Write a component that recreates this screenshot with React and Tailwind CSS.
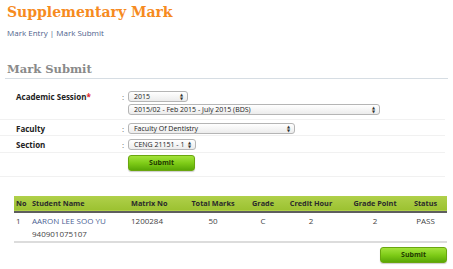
import React from 'react';

const Select = ({ value, className = '' }) => (
    <div className={`flex items-center justify-between h-[11px] pl-[5px] pr-[4px] rounded-[3px] border border-[#b5b5b5] bg-gradient-to-b from-white to-[#ececec] text-[7px] text-[#222] leading-none ${className}`}>
        <span>{value}</span>
        <span className="flex flex-col text-[4px] leading-[4px] text-[#333]">
            <span>▲</span>
            <span>▼</span>
        </span>
    </div>
);

const GreenButton = ({ className = '' }) => (
    <button className={`h-[16px] w-[67px] rounded-[3px] border border-[#6aa60f] bg-gradient-to-b from-[#a3e33a] via-[#7fcc17] to-[#5aa806] text-[7px] font-bold text-[#1e3a00] shadow-[0_1px_1px_rgba(0,0,0,0.2)] ${className}`}>
        Submit
    </button>
);

const FormRow = ({ label, required, children, className = '' }) => (
    <div className={`flex border-b border-[#f1f1f1] ${className}`}>
        <div className="w-[122px] pl-[16px] text-[8px] font-bold text-[#222] pt-[3px]">
            {label}
            {required && <span className="text-[#e0262c]">*</span>}
        </div>
        <div className="w-[6px] text-[8px] text-[#666] pt-[3px]">:</div>
        <div className="flex flex-col gap-[2px] pt-[3px]">{children}</div>
    </div>
);

const App = () => {
    const cols = [
        { name: 'No', w: 'w-[16px]', cls: 'pl-[2px] text-left' },
        { name: 'Student Name', w: 'w-[99px]', cls: 'pl-[2px] text-left' },
        { name: 'Matrix No', w: 'w-[59px]', cls: 'pl-[2px] text-left' },
        { name: 'Total Marks', w: 'w-[50px]', cls: 'text-center' },
        { name: 'Grade', w: 'w-[50px]', cls: 'text-center' },
        { name: 'Credit Hour', w: 'w-[46px]', cls: 'text-center' },
        { name: 'Grade Point', w: 'w-[70px]', cls: 'pl-[12px] text-center' },
        { name: 'Status', w: 'w-[43px]', cls: 'text-center' },
    ];
    const row = ['1', 'AARON LEE SOO YU', '1200284', '50', 'C', '2', '2', 'PASS'];

    return (
        <div className="w-[453px] h-[269px] bg-white overflow-hidden" style={{ fontFamily: '"Open Sans", "DejaVu Sans", sans-serif' }}>
            <div className="pl-[7px] pt-[1px]">
                <h1 className="text-[14px] font-bold text-[#f68b1f] leading-[22px]" style={{ fontFamily: '"DejaVu Serif", serif' }}>
                    Supplementary Mark
                </h1>
                <div className="mt-[4px] text-[8px] text-[#4f5f8c] leading-[12px]">
                    <span>Mark Entry</span> | <span>Mark Submit</span>
                </div>
            </div>

            <div className="mt-[22px] mx-[5px] border-b border-[#d6dde3] pb-[1px]">
                <h2 className="pl-[2px] text-[11.5px] font-bold text-[#8a8a8a] leading-[16px]" style={{ fontFamily: '"DejaVu Serif", serif' }}>
                    Mark Submit
                </h2>
            </div>

            <div className="mt-[9px] mr-[8px]">
                <FormRow label="Academic Session" required className="h-[32px]">
                    <Select value="2015" className="w-[60px]" />
                    <Select value="2015/02 - Feb 2015 - July 2015 (BDS)" className="w-[252px]" />
                </FormRow>
                <FormRow label="Faculty" className="h-[16px]">
                    <Select value="Faculty Of Dentistry" className="w-[167px]" />
                </FormRow>
                <FormRow label="Section" className="h-[17px]">
                    <Select value="CENG 21151 - 1" className="w-[68px]" />
                </FormRow>
                <div className="flex h-[24px] border-b border-[#f1f1f1] pl-[128px] pt-[2px]">
                    <GreenButton />
                </div>
            </div>

            <div className="mt-[19px] mx-[14px] w-[433px]">
                <table className="w-full table-fixed border-collapse">
                    <colgroup>
                        {cols.map(c => <col key={c.name} className={c.w} />)}
                    </colgroup>
                    <thead>
                        <tr className="h-[16px] bg-gradient-to-b from-[#b0d04a] to-[#9cc231] border-b-2 border-[#5e5e5e]">
                            {cols.map(c => (
                                <th key={c.name} className={`font-bold text-[7.3px] text-[#2b2b2b] p-0 whitespace-nowrap ${c.cls}`}>{c.name}</th>
                            ))}
                        </tr>
                    </thead>
                    <tbody className="text-[#444] text-[8px]">
                        <tr className="h-[14px]">
                            {row.map((v, i) => (
                                <td key={i} className={`pt-[2px] p-0 whitespace-nowrap ${cols[i].cls} ${i === 1 ? 'text-[#4d5f94]' : ''}`}>{v}</td>
                            ))}
                        </tr>
                        <tr className="h-[14px]">
                            <td></td>
                            <td className="pl-[2px] text-[#444]">940901075107</td>
                            <td colSpan={6}></td>
                        </tr>
                    </tbody>
                </table>
                <div className="border-t-2 border-[#dcdcdc]" />
                <div className="flex justify-end mt-[4px]">
                    <GreenButton />
                </div>
            </div>
        </div>
    );
};

export default App;
